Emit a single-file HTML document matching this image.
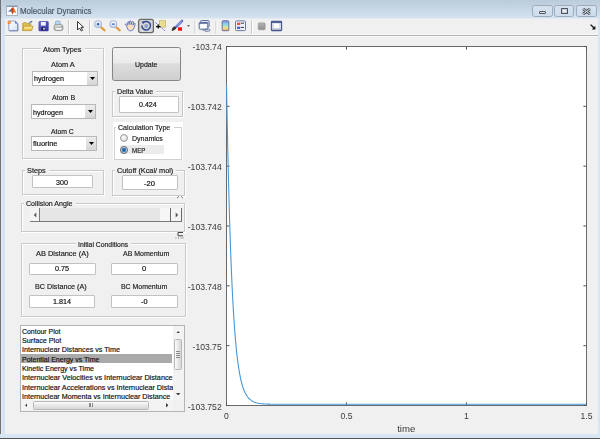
<!DOCTYPE html><html><head><meta charset="utf-8"><style>
*{margin:0;padding:0;box-sizing:border-box}
html,body{width:600px;height:439px;overflow:hidden;background:#f0f0f0;font-family:"Liberation Sans",sans-serif}
.a{position:absolute}
.t{position:absolute;white-space:pre;transform-origin:0 0;-webkit-text-stroke:0.18px currentColor}
.panel{position:absolute;border:1px solid #c9c9c9;box-shadow:1px 1px 0 #fff, inset 1px 1px 0 #fff}
.ptitle{position:absolute;background:#f0f0f0}
.edit{position:absolute;background:#fff;border:1px solid #bfc3c8;border-radius:1px}
.dd{position:absolute;background:#fff;border:1px solid #b8b8b8}
.ddb{position:absolute;background:linear-gradient(#ececec,#d6d6d6);}
</style></head><body><div id="root" style="position:absolute;left:0;top:0;width:600px;height:439px;overflow:hidden;filter:blur(0.35px)">

<div class="a" style="left:0;top:0;width:600px;height:19px;background:linear-gradient(#bacbdb,#d6e3f0)"></div>
<div class="a" style="left:0;top:18px;width:600px;height:1px;background:#e3eaf1"></div>
<div class="a" style="left:0;top:0;width:1px;height:439px;background:#707070"></div>
<div class="a" style="left:1px;top:18px;width:1px;height:421px;background:#e2edf9"></div>
<div class="a" style="left:2px;top:18px;width:3px;height:421px;background:#d6e4f2"></div>
<div class="a" style="left:598px;top:18px;width:2px;height:421px;background:#d8e5f2"></div>
<div class="a" style="left:0;top:434px;width:600px;height:4px;background:#d8e5f2"></div>
<div class="a" style="left:0;top:438px;width:600px;height:1px;background:#555"></div>
<div class="a" style="left:1px;top:0;width:1px;height:18px;background:#c4d3e2"></div>
<div class="a" style="left:5px;top:34px;width:593px;height:1px;background:#f8f8f8"></div>
<div class="a" style="left:5px;top:35px;width:593px;height:1px;background:#b4b4b4"></div>
<div class="a" style="left:5px;top:36px;width:593px;height:1px;background:#fafafa"></div>
<svg class="a" style="left:6px;top:5px" width="12" height="11" viewBox="0 0 12 11">
<rect x="0.5" y="0.5" width="11" height="10" fill="#fafbfc" stroke="#a8b4c0" stroke-width="1"/>
<rect x="1" y="1" width="10" height="1" fill="#8898a8"/>
<path d="M1.8 6.6 L4.6 4.6 L5.6 6.8 Z" fill="#3a80c8"/>
<path d="M4.6 4.6 L7.4 1.9 L10.4 8.2 L8.2 6.9 L6.2 9.4 L5.6 6.8 Z" fill="#e66a24"/>
<path d="M4.6 4.6 L7.4 1.9 L6.2 9.4 L5.6 6.8 Z" fill="#b43c1a"/>
</svg>
<div class="a" style="left:532.3px;top:5.2px;width:20.3px;height:11.5px;border:1px solid #9aacc0;border-radius:2.5px;background:linear-gradient(#d7e2ee,#cedceb)"></div>
<div class="a" style="left:554.4px;top:5.2px;width:20.0px;height:11.5px;border:1px solid #9aacc0;border-radius:2.5px;background:linear-gradient(#d7e2ee,#cedceb)"></div>
<div class="a" style="left:576.3px;top:5.2px;width:20.3px;height:11.5px;border:1px solid #9aacc0;border-radius:2.5px;background:linear-gradient(#d7e2ee,#cedceb)"></div>
<div class="a" style="left:538.8px;top:11px;width:7.2px;height:2.8px;background:#e8e8e8;border:1px solid #4c5560;border-radius:1px"></div>
<div class="a" style="left:560.6px;top:7.8px;width:7.6px;height:5.8px;background:#c8ced6;border:1.5px solid #4c5560;border-radius:0.5px"></div>
<div class="a" style="left:562.6px;top:9.8px;width:3.6px;height:1.8px;background:#eef2f6"></div>
<svg class="a" style="left:582px;top:8px" width="9" height="7" viewBox="0 0 9 7"><path d="M1 0.8 L8 6.2 M8 0.8 L1 6.2" stroke="#4c5560" stroke-width="2.8"/><path d="M1 0.8 L8 6.2 M8 0.8 L1 6.2" stroke="#e4e9ef" stroke-width="1.0"/></svg>
<svg class="a" style="left:0;top:17px" width="300" height="18" viewBox="0 17 300 18">
<!-- new -->
<defs>
<linearGradient id="pg" x1="0" y1="0" x2="1" y2="1"><stop offset="0" stop-color="#ffffff"/><stop offset="1" stop-color="#d6e2f4"/></linearGradient>
<linearGradient id="fd" x1="0" y1="0" x2="0" y2="1"><stop offset="0" stop-color="#fff3a8"/><stop offset="1" stop-color="#e3b83a"/></linearGradient>
<linearGradient id="sv" x1="0" y1="0" x2="1" y2="1"><stop offset="0" stop-color="#6f70e0"/><stop offset="1" stop-color="#2f32a0"/></linearGradient>
<linearGradient id="pr" x1="0" y1="0" x2="0" y2="1"><stop offset="0" stop-color="#e4e4e4"/><stop offset="1" stop-color="#9a9a9a"/></linearGradient>
</defs>
<path d="M8.8 21 H15.2 L17.6 23.4 V30.6 H8.8 Z" fill="url(#pg)" stroke="#8c9bc8" stroke-width="0.9"/>
<path d="M9.3 30.9 H17.9 V23.6" fill="none" stroke="#6a78b0" stroke-width="0.8"/>
<path d="M15.2 21 V23.4 H17.6 Z" fill="#4a60a8"/>
<circle cx="9.2" cy="22.5" r="1.7" fill="#f07a38"/>
<circle cx="9.2" cy="22.5" r="0.7" fill="#ffd080"/>
<!-- open -->
<path d="M22.8 30.6 V23.6 Q22.8 22.8 23.6 22.8 H26.4 L27.3 23.7 H30.8 V26" fill="#e0c050" stroke="#b89430" stroke-width="0.8"/>
<path d="M23.6 26.2 H33 L31.6 30.6 H22.8 Z" fill="url(#fd)" stroke="#b89430" stroke-width="0.8"/>
<path d="M28.5 23.3 Q29.8 21.4 31.8 21.8" fill="none" stroke="#4a6ea8" stroke-width="1"/>
<path d="M32.6 21.6 L31 20.8 L31.3 22.8 Z" fill="#3a5ea0"/>
<!-- save -->
<rect x="38.9" y="21.6" width="9.4" height="9.3" rx="0.6" fill="url(#sv)" stroke="#3838a0" stroke-width="0.6"/>
<rect x="40.9" y="22" width="4.9" height="3.6" fill="#f2f4ff"/>
<rect x="41.3" y="27" width="3.9" height="3.5" fill="#222250"/>
<rect x="43.2" y="27.8" width="1.6" height="1.8" fill="#e8e8f0"/>
<!-- print -->
<path d="M55 24.5 L55.8 21 H59.8 L60.6 24.5 Z" fill="#b8d8f4" stroke="#7c9cc0" stroke-width="0.6"/>
<rect x="54" y="24.4" width="9" height="6.2" rx="2.2" fill="url(#pr)" stroke="#7a7a7a" stroke-width="0.6"/>
<rect x="55.5" y="28" width="6" height="1.8" fill="#f4f4f4"/>
<circle cx="61.6" cy="26.4" r="0.5" fill="#40a040"/>
<!-- seps -->
<rect x="68" y="20" width="1" height="14" fill="#c6c6c6"/><rect x="69" y="20" width="1" height="14" fill="#fff"/>
<rect x="89" y="20" width="1" height="14" fill="#c6c6c6"/><rect x="90" y="20" width="1" height="14" fill="#fff"/>
<!-- pointer -->
<path d="M77.5 21.5 V30 L79.5 28 L81.3 31 L82.6 30.3 L81 27.3 L83.6 27.3 Z" fill="#fff" stroke="#202020" stroke-width="0.9"/>
<!-- zoom in -->
<defs><linearGradient id="ln" x1="0" y1="0" x2="0" y2="1"><stop offset="0" stop-color="#ffffff"/><stop offset="1" stop-color="#c4daf2"/></linearGradient></defs>
<line x1="101.2" y1="27.4" x2="104.6" y2="30.4" stroke="#e89a3a" stroke-width="2.1" stroke-linecap="round"/>
<circle cx="98.1" cy="24.1" r="3.4" fill="url(#ln)" stroke="#a8b4e0" stroke-width="1.1"/>
<path d="M96.8 24.1 H99.4 M98.1 22.8 V25.4" stroke="#2a4ea0" stroke-width="1.1"/>
<!-- zoom out -->
<line x1="116.4" y1="27.4" x2="119.8" y2="30.4" stroke="#e89a3a" stroke-width="2.1" stroke-linecap="round"/>
<circle cx="113.3" cy="24.1" r="3.4" fill="url(#ln)" stroke="#a8b4e0" stroke-width="1.1"/>
<path d="M111.9 24.1 H114.7" stroke="#2a4ea0" stroke-width="1.1"/>
<!-- hand -->
<path d="M126.6 26.2 L125.4 24.6 Q125.2 23.6 126.3 24 L127.6 25.2 V22.3 Q127.9 21.3 128.8 21.9 L129.2 24.6 L129.6 21.2 Q130.3 20.4 131 21.2 L131.2 24.6 L132.1 21.7 Q132.9 21.1 133.5 21.9 L133 25.2 L134.2 23.4 Q135 23 135.3 23.8 L134.2 27.5 Q133.4 30.6 130.8 30.8 H129.6 Q127.6 30.4 126.6 26.2 Z" fill="#fbe0c0" stroke="#4f6cc8" stroke-width="0.85"/>
<!-- rotate pressed -->
<rect x="138.6" y="19.4" width="14.8" height="13.2" rx="2" fill="#d6d6d6" stroke="#6a6a6a" stroke-width="1.3"/>
<path d="M143.2 22.6 A4.3 4.3 0 1 1 141.9 25.4" fill="none" stroke="#2f4a92" stroke-width="1.5"/>
<path d="M141.4 21.6 L144.6 21.4 L143.2 24.2 Z" fill="#2f4a92"/>
<circle cx="146.2" cy="26" r="1.9" fill="#8ca0cc"/>
<!-- data cursor -->
<rect x="159.4" y="20.8" width="6.2" height="6.2" fill="#f0e8a0" stroke="#c2b060" stroke-width="0.8"/>
<rect x="160.6" y="22" width="3.8" height="3.8" fill="#e6dc8c"/>
<path d="M155.6 22.6 L165.6 31.4" stroke="#4a56e0" stroke-width="0.9" stroke-dasharray="1.6 1.1"/>
<path d="M158.2 24.6 V28.6 M156 26.6 H160.4" stroke="#111" stroke-width="1.4"/>
<!-- brush -->
<path d="M182 21 L176.4 26.6" stroke="#6474d0" stroke-width="2.6" stroke-linecap="round"/>
<path d="M181.6 21.2 L177 25.8" stroke="#c0c8f4" stroke-width="0.8"/>
<path d="M171.8 31 Q171.4 27.8 174.2 26.2 L176.6 27.6 Q175.6 30.6 171.8 31 Z" fill="#3a3a3a"/>
<rect x="178" y="27.3" width="4" height="3.4" fill="#ff0a0a"/>
<path d="M187 25.2 H190 L188.5 26.8 Z" fill="#333"/>
<rect x="194.5" y="20.5" width="1" height="13" fill="#c6c6c6"/><rect x="195.5" y="20.5" width="1" height="13" fill="#fff"/>
<!-- link -->
<rect x="200.5" y="20.6" width="8.6" height="6.4" rx="0.8" fill="#e4ecf6" stroke="#5a6c9c" stroke-width="1"/>
<rect x="199.2" y="22.6" width="8.6" height="6.6" rx="0.8" fill="#eef4fb" stroke="#5a6c9c" stroke-width="1"/>
<rect x="199.2" y="22.4" width="8.6" height="1.4" fill="#5a6c9c"/>
<rect x="200.6" y="24.4" width="5.8" height="3.6" fill="#ffffff"/>
<path d="M202.6 30.2 H205.6 M205 29.2 H208.6 Q210 29.2 210 30.2 Q210 31.2 208.6 31.2 H205" fill="none" stroke="#5a6c9c" stroke-width="0.9"/>
<rect x="215.5" y="20.5" width="1" height="13" fill="#c6c6c6"/><rect x="216.5" y="20.5" width="1" height="13" fill="#fff"/>
<!-- colorbar -->
<defs><linearGradient id="cb" x1="0" y1="0" x2="0" y2="1"><stop offset="0" stop-color="#8a90ea"/><stop offset="0.4" stop-color="#8adce6"/><stop offset="0.72" stop-color="#eee48a"/><stop offset="1" stop-color="#f2a45c"/></linearGradient>
<linearGradient id="gr" x1="0" y1="0" x2="0" y2="1"><stop offset="0" stop-color="#b4b4b4"/><stop offset="1" stop-color="#8e8e8e"/></linearGradient></defs>
<rect x="222.2" y="20.8" width="6.6" height="9.9" rx="0.8" fill="url(#cb)" stroke="#5a6a98" stroke-width="0.9"/>
<!-- legend -->
<rect x="235.5" y="20.9" width="10" height="9.7" rx="1" fill="#eef1f7" stroke="#6a7aa0" stroke-width="1"/>
<rect x="237" y="22.6" width="3.2" height="2.4" fill="#f05050"/>
<rect x="237" y="26.6" width="3.2" height="2.4" fill="#5060e8"/>
<path d="M240.8 23.2 H244 M240.8 27.4 H244" stroke="#222" stroke-width="0.9"/>
<rect x="251" y="20.5" width="1" height="13" fill="#c6c6c6"/><rect x="252" y="20.5" width="1" height="13" fill="#fff"/>
<!-- grid -->
<rect x="258.2" y="22.8" width="7" height="7" rx="1.2" fill="url(#gr)" stroke="#8a8a8a" stroke-width="0.5"/>
<!-- plot box -->
<rect x="271.4" y="21.3" width="10.2" height="9.3" rx="0.6" fill="#d4dae6" stroke="#43558f" stroke-width="1.1"/>
<rect x="271.4" y="21.3" width="10.2" height="1.6" fill="#43558f"/>
<rect x="273.8" y="23.6" width="5.4" height="4.6" fill="#ffffff"/>
<rect x="272" y="28.6" width="9" height="1.2" fill="#a8b0c4"/>
</svg>
<svg class="a" style="left:590px;top:24px" width="6" height="6" viewBox="0 0 6 6"><path d="M0.6 0.6 L3.8 3.8" stroke="#111" stroke-width="1.3"/><path d="M5.4 1.8 V5.4 H1.8 Z" fill="#111"/></svg>
<div class="panel" style="left:22px;top:48px;width:82px;height:111px"></div>
<div class="ptitle" style="left:41px;top:44px;width:44px;height:8px"></div>
<div class="dd" style="left:32px;top:71px;width:66px;height:15px"></div>
<div class="ddb" style="left:87px;top:72px;width:10px;height:13px"></div>
<svg class="a" style="left:90.0px;top:77.0px" width="5" height="3" viewBox="0 0 5 3"><path d="M0 0 H5 L2.5 3 Z" fill="#000"/></svg>
<div class="dd" style="left:30.5px;top:104px;width:65.5px;height:15px"></div>
<div class="ddb" style="left:85px;top:105px;width:10px;height:13px"></div>
<svg class="a" style="left:88.0px;top:110.0px" width="5" height="3" viewBox="0 0 5 3"><path d="M0 0 H5 L2.5 3 Z" fill="#000"/></svg>
<div class="dd" style="left:31px;top:136px;width:66px;height:15px"></div>
<div class="ddb" style="left:86px;top:137px;width:10px;height:13px"></div>
<svg class="a" style="left:89.0px;top:142.0px" width="5" height="3" viewBox="0 0 5 3"><path d="M0 0 H5 L2.5 3 Z" fill="#000"/></svg>
<div class="a" style="left:112px;top:47px;width:69px;height:34px;border:1px solid #858585;border-radius:2.5px;background:linear-gradient(#f2f2f2 0%,#ebebeb 45%,#dddddd 50%,#cfcfcf 100%)"></div>
<div class="panel" style="left:112px;top:91px;width:71px;height:26px"></div>
<div class="ptitle" style="left:115px;top:87px;width:41px;height:8px"></div>
<div class="edit" style="left:119px;top:96px;width:60px;height:17px"></div>
<div class="a" style="left:113px;top:122px;width:70px;height:38px;background:#fff"></div>
<div class="a" style="left:113.5px;top:127px;width:68.5px;height:32.5px;border:1px solid #d0d0d0"></div>
<div class="a" style="left:116px;top:123px;width:58px;height:8px;background:#fff"></div>
<div class="a" style="left:119.5px;top:145px;width:44.5px;height:9px;background:#ececec"></div>
<div class="a" style="left:120px;top:134px;width:8.4px;height:8.4px;border-radius:50%;border:1px solid #9a9a9a;background:radial-gradient(circle at 40% 40%,#fafafa,#d4d4d4)"></div>
<div class="a" style="left:120px;top:146px;width:8.4px;height:8.4px;border-radius:50%;border:1px solid #5e6670;background:radial-gradient(circle,#0d3f78 0,#2d7fc8 1.4px,#5a8fba 2.1px,#d0d4d8 2.6px,#b8bcc0 4.2px)"></div>
<div class="panel" style="left:22px;top:170px;width:82px;height:25px"></div>
<div class="ptitle" style="left:25px;top:166px;width:24px;height:8px"></div>
<div class="edit" style="left:32px;top:175px;width:61px;height:13px"></div>
<div class="panel" style="left:112px;top:170px;width:73px;height:26px"></div>
<div class="ptitle" style="left:115px;top:166px;width:61px;height:8px"></div>
<div class="edit" style="left:122px;top:175px;width:56px;height:15px"></div>
<svg class="a" style="left:176px;top:195px" width="8" height="4" viewBox="0 0 8 4"><path d="M1 3 L2.8 1.3 M5 1.3 L6.8 3" fill="none" stroke="#555" stroke-width="0.9"/></svg>
<div class="panel" style="left:21px;top:203px;width:164px;height:29px"></div>
<div class="ptitle" style="left:24px;top:199px;width:52px;height:8px"></div>
<div class="a" style="left:29.5px;top:208px;width:152px;height:14px;background:#e6e6e6;border-bottom:1px solid #7a7a7a"></div>
<div class="a" style="left:29.5px;top:208px;width:10px;height:14px;background:#f4f4f4;border-right:1px solid #7a7a7a;border-bottom:1px solid #7a7a7a"></div>
<div class="a" style="left:160px;top:208px;width:11px;height:14px;background:#f6f6f6;border-right:1px solid #6a6a6a;border-bottom:1px solid #7a7a7a"></div>
<div class="a" style="left:171px;top:208px;width:10.5px;height:14px;background:#f4f4f4;border-right:1px solid #6a6a6a;border-bottom:1px solid #7a7a7a"></div>
<svg class="a" style="left:33px;top:212px" width="4" height="6" viewBox="0 0 4 6"><path d="M3.3 0.5 V5.5 L0.8 3 Z" fill="#555"/></svg>
<svg class="a" style="left:175px;top:212px" width="4" height="6" viewBox="0 0 4 6"><path d="M0.7 0.5 V5.5 L3.2 3 Z" fill="#555"/></svg>
<svg class="a" style="left:175px;top:231px" width="9" height="8" viewBox="0 0 9 8"><path d="M8 1.5 H3 V4.8 H8" fill="none" stroke="#444" stroke-width="1"/><path d="M0.5 7 H1.5 M3 7 H4 M5.5 7 H6.5 M7.5 7 H8.5" fill="none" stroke="#666" stroke-width="0.9"/></svg>
<div class="panel" style="left:21px;top:243px;width:165px;height:74px"></div>
<div class="ptitle" style="left:76px;top:239px;width:55px;height:8px"></div>
<div class="edit" style="left:28.5px;top:262.5px;width:67px;height:12.5px"></div>
<div class="edit" style="left:110.5px;top:262.5px;width:67.5px;height:12.5px"></div>
<div class="edit" style="left:28.5px;top:295px;width:66.5px;height:13px"></div>
<div class="edit" style="left:110.5px;top:295px;width:67.5px;height:13px"></div>
<div class="a" style="left:20px;top:325px;width:165px;height:87px;background:#fff;border:1px solid #b4b4b4"></div>
<div class="a" style="left:21px;top:354px;width:151px;height:9px;background:#aaaaaa"></div>
<div class="a" style="left:21px;top:326px;width:151.5px;height:74px;overflow:hidden">
<div class="t" style="left:1.00px;top:1.74px;font-size:7.4px;line-height:7.4px;color:#111;transform:scaleX(0.9369);">Contour Plot</div>
<div class="t" style="left:1.00px;top:11.07px;font-size:7.4px;line-height:7.4px;color:#111;transform:scaleX(0.9735);">Surface Plot</div>
<div class="t" style="left:1.00px;top:20.40px;font-size:7.4px;line-height:7.4px;color:#111;transform:scaleX(0.9689);">Internuclear Distances vs Time</div>
<div class="t" style="left:1.00px;top:29.73px;font-size:7.4px;line-height:7.4px;color:#111;transform:scaleX(0.9468);">Potential Energy vs Time</div>
<div class="t" style="left:1.00px;top:39.06px;font-size:7.4px;line-height:7.4px;color:#111;transform:scaleX(0.9578);">Kinetic Energy vs Time</div>
<div class="t" style="left:1.00px;top:48.39px;font-size:7.4px;line-height:7.4px;color:#111;transform:scaleX(0.9800);">Internuclear Velocities vs Internuclear Distance</div>
<div class="t" style="left:1.00px;top:57.72px;font-size:7.4px;line-height:7.4px;color:#111;transform:scaleX(0.9800);">Internuclear Accelerations vs Internuclear Distance</div>
<div class="t" style="left:1.00px;top:67.05px;font-size:7.4px;line-height:7.4px;color:#111;transform:scaleX(0.9671);">Internuclear Momenta vs Internuclear Distance</div>
</div>
<div class="a" style="left:172.5px;top:326px;width:11.5px;height:74px;background:#f3f3f3"></div>
<div class="a" style="left:173.5px;top:338.5px;width:8.8px;height:31px;border:1px solid #b8b8b8;border-radius:1.5px;background:linear-gradient(90deg,#fbfbfb,#e4e4e4 60%,#d6d6d6)"></div>
<div class="a" style="left:175.6px;top:351.3px;width:4.2px;height:0.9px;background:#8a8a8a"></div>
<div class="a" style="left:175.6px;top:353.1px;width:4.2px;height:0.9px;background:#8a8a8a"></div>
<div class="a" style="left:175.6px;top:354.9px;width:4.2px;height:0.9px;background:#8a8a8a"></div>
<div class="a" style="left:175.6px;top:356.7px;width:4.2px;height:0.9px;background:#8a8a8a"></div>
<svg class="a" style="left:176.3px;top:330.8px" width="4.4" height="2.6" viewBox="0 0 4.4 2.6"><path d="M0 2.6 H4.4 L2.2 0 Z" fill="#404040"/></svg>
<svg class="a" style="left:176.3px;top:392.6px" width="4.4" height="2.6" viewBox="0 0 4.4 2.6"><path d="M0 0 H4.4 L2.2 2.6 Z" fill="#404040"/></svg>
<div class="a" style="left:21px;top:400px;width:151.5px;height:11px;background:#f3f3f3"></div>
<div class="a" style="left:172.5px;top:400px;width:11.5px;height:11px;background:#f0f0f0"></div>
<div class="a" style="left:33.3px;top:401px;width:115.3px;height:9.3px;border:1px solid #b8b8b8;border-radius:1.5px;background:linear-gradient(#fbfbfb,#e4e4e4 60%,#d6d6d6)"></div>
<div class="a" style="left:88.6px;top:403.3px;width:0.9px;height:4px;background:#8a8a8a"></div>
<div class="a" style="left:90.4px;top:403.3px;width:0.9px;height:4px;background:#8a8a8a"></div>
<div class="a" style="left:92.2px;top:403.3px;width:0.9px;height:4px;background:#8a8a8a"></div>
<svg class="a" style="left:24.5px;top:403.4px" width="2.6" height="4.4" viewBox="0 0 2.6 4.4"><path d="M2.6 0 V4.4 L0 2.2 Z" fill="#404040"/></svg>
<svg class="a" style="left:165.6px;top:403.4px" width="2.6" height="4.4" viewBox="0 0 2.6 4.4"><path d="M0 0 V4.4 L2.6 2.2 Z" fill="#404040"/></svg>
<div class="t" style="left:20.10px;top:6.95px;font-size:8.8px;line-height:8.8px;color:#4a5868;transform:scaleX(0.9040);">Molecular Dynamics</div>
<div class="t" style="left:43.00px;top:45.54px;font-size:7.4px;line-height:7.4px;color:#222;transform:scaleX(0.9900);">Atom Types</div>
<div class="t" style="left:51.20px;top:60.54px;font-size:7.4px;line-height:7.4px;color:#222;transform:scaleX(0.9988);">Atom A</div>
<div class="t" style="left:34.00px;top:75.34px;font-size:7.4px;line-height:7.4px;color:#111;transform:scaleX(0.9731);">hydrogen</div>
<div class="t" style="left:52.00px;top:94.34px;font-size:7.4px;line-height:7.4px;color:#222;transform:scaleX(0.9532);">Atom B</div>
<div class="t" style="left:32.50px;top:108.74px;font-size:7.4px;line-height:7.4px;color:#111;transform:scaleX(0.9731);">hydrogen</div>
<div class="t" style="left:51.40px;top:127.94px;font-size:7.4px;line-height:7.4px;color:#222;transform:scaleX(0.9253);">Atom C</div>
<div class="t" style="left:33.00px;top:140.24px;font-size:7.4px;line-height:7.4px;color:#111;transform:scaleX(1.0103);">fluorine</div>
<div class="t" style="left:134.90px;top:61.14px;font-size:7.4px;line-height:7.4px;color:#222;transform:scaleX(0.9436);">Update</div>
<div class="t" style="left:117.40px;top:88.34px;font-size:7.4px;line-height:7.4px;color:#222;transform:scaleX(0.9636);">Delta Value</div>
<div class="t" style="left:139.20px;top:100.64px;font-size:7.4px;line-height:7.4px;color:#111;transform:scaleX(0.9568);">0.424</div>
<div class="t" style="left:117.90px;top:123.74px;font-size:7.4px;line-height:7.4px;color:#222;transform:scaleX(0.9594);">Calculation Type</div>
<div class="t" style="left:131.80px;top:134.84px;font-size:7.4px;line-height:7.4px;color:#222;transform:scaleX(0.9491);">Dynamics</div>
<div class="t" style="left:131.80px;top:146.94px;font-size:7.4px;line-height:7.4px;color:#222;transform:scaleX(0.8367);">MEP</div>
<div class="t" style="left:27.40px;top:167.44px;font-size:7.4px;line-height:7.4px;color:#222;transform:scaleX(0.9891);">Steps</div>
<div class="t" style="left:55.80px;top:178.94px;font-size:7.4px;line-height:7.4px;color:#111;transform:scaleX(0.9641);">300</div>
<div class="t" style="left:117.00px;top:167.04px;font-size:7.4px;line-height:7.4px;color:#222;transform:scaleX(0.9885);">Cutoff (Kcal/ mol)</div>
<div class="t" style="left:144.30px;top:179.74px;font-size:7.4px;line-height:7.4px;color:#111;transform:scaleX(1.0292);">-20</div>
<div class="t" style="left:25.80px;top:200.24px;font-size:7.4px;line-height:7.4px;color:#222;transform:scaleX(0.9591);">Collision Angle</div>
<div class="t" style="left:77.90px;top:240.74px;font-size:7.4px;line-height:7.4px;color:#222;transform:scaleX(0.9238);">Initial Conditions</div>
<div class="t" style="left:35.90px;top:250.24px;font-size:7.4px;line-height:7.4px;color:#222;transform:scaleX(1.0004);">AB Distance (A)</div>
<div class="t" style="left:54.70px;top:265.24px;font-size:7.4px;line-height:7.4px;color:#111;transform:scaleX(0.9798);">0.75</div>
<div class="t" style="left:122.70px;top:250.24px;font-size:7.4px;line-height:7.4px;color:#222;transform:scaleX(0.9470);">AB Momentum</div>
<div class="t" style="left:141.80px;top:265.24px;font-size:7.4px;line-height:7.4px;color:#111;transform:scaleX(1.0182);">0</div>
<div class="t" style="left:35.30px;top:282.74px;font-size:7.4px;line-height:7.4px;color:#222;transform:scaleX(0.9758);">BC Distance (A)</div>
<div class="t" style="left:52.50px;top:297.94px;font-size:7.4px;line-height:7.4px;color:#111;transform:scaleX(0.9730);">1.814</div>
<div class="t" style="left:120.80px;top:282.74px;font-size:7.4px;line-height:7.4px;color:#222;transform:scaleX(0.9372);">BC Momentum</div>
<div class="t" style="left:140.80px;top:297.94px;font-size:7.4px;line-height:7.4px;color:#111;transform:scaleX(0.9881);">-0</div>
<div class="a" style="left:226px;top:46px;width:361px;height:360px;background:#fff;border:1px solid #6a6a6a"></div>
<svg class="a" style="left:0;top:0" width="600" height="439"><path d="M226.5 46.50 H229.6 M586.5 46.50 H583.4" stroke="#555" stroke-width="1"/><path d="M226.5 106.33 H229.6 M586.5 106.33 H583.4" stroke="#555" stroke-width="1"/><path d="M226.5 166.17 H229.6 M586.5 166.17 H583.4" stroke="#555" stroke-width="1"/><path d="M226.5 226.00 H229.6 M586.5 226.00 H583.4" stroke="#555" stroke-width="1"/><path d="M226.5 285.83 H229.6 M586.5 285.83 H583.4" stroke="#555" stroke-width="1"/><path d="M226.5 345.67 H229.6 M586.5 345.67 H583.4" stroke="#555" stroke-width="1"/><path d="M226.5 405.50 H229.6 M586.5 405.50 H583.4" stroke="#555" stroke-width="1"/><path d="M226.50 46.5 V49.6 M226.50 405.5 V402.4" stroke="#555" stroke-width="1"/><path d="M346.50 46.5 V49.6 M346.50 405.5 V402.4" stroke="#555" stroke-width="1"/><path d="M466.50 46.5 V49.6 M466.50 405.5 V402.4" stroke="#555" stroke-width="1"/><path d="M586.50 46.5 V49.6 M586.50 405.5 V402.4" stroke="#555" stroke-width="1"/><polyline points="226.50,84.60 227.50,136.88 228.50,180.61 229.50,217.20 230.50,247.79 231.50,273.39 232.50,294.80 233.50,312.70 234.50,327.68 235.50,340.21 236.50,350.69 237.50,359.46 238.50,366.79 239.50,372.93 240.50,378.06 241.50,382.35 242.50,385.94 243.50,388.94 244.50,391.45 245.50,393.55 246.50,395.31 247.50,396.78 248.50,398.01 249.50,399.04 250.50,399.90 251.50,400.62 252.50,401.22 253.50,401.72 254.50,402.15 255.50,402.50 256.50,402.79 257.50,403.04 258.50,403.25 259.50,403.42 260.50,403.56 261.50,403.68 262.50,403.78 263.50,403.87 264.50,403.94 265.50,404.00 266.50,404.05 267.50,404.09 268.50,404.12 269.50,404.15 270.50,404.18 271.50,404.20 272.50,404.21 273.50,404.23 274.50,404.24 275.50,404.25 276.50,404.26 277.50,404.26 278.50,404.27 279.50,404.28 280.50,404.28 281.50,404.28 282.50,404.29 283.50,404.29 284.50,404.29 285.50,404.29 286.50,404.29 287.50,404.29 288.50,404.30 289.50,404.30 290.50,404.30 291.50,404.30 292.50,404.30 293.50,404.30 294.50,404.30 295.50,404.30 296.50,404.30 297.50,404.30 298.50,404.30 299.50,404.30 300.50,404.30 301.50,404.30 302.50,404.30 303.50,404.30 304.50,404.30 305.50,404.30 306.50,404.30 307.50,404.30 308.50,404.30 309.50,404.30 310.50,404.30 311.50,404.30 312.50,404.30 313.50,404.30 314.50,404.30 315.50,404.30 316.50,404.30 317.50,404.30 318.50,404.30 319.50,404.30 320.50,404.30 321.50,404.30 322.50,404.30 323.50,404.30 324.50,404.30 325.50,404.30 326.50,404.30 327.50,404.30 328.50,404.30 329.50,404.30 330.50,404.30 331.50,404.30 332.50,404.30 333.50,404.30 334.50,404.30 335.50,404.30 336.50,404.30 337.50,404.30 338.50,404.30 339.50,404.30 340.50,404.30 341.50,404.30 342.50,404.30 343.50,404.30 344.50,404.30 345.50,404.30 346.50,404.30 347.50,404.30 348.50,404.30 349.50,404.30 350.50,404.30 351.50,404.30 352.50,404.30 353.50,404.30 354.50,404.30 355.50,404.30 356.50,404.30 357.50,404.30 358.50,404.30 359.50,404.30 360.50,404.30 361.50,404.30 362.50,404.30 363.50,404.30 364.50,404.30 365.50,404.30 366.50,404.30 367.50,404.30 368.50,404.30 369.50,404.30 370.50,404.30 371.50,404.30 372.50,404.30 373.50,404.30 374.50,404.30 375.50,404.30 376.50,404.30 377.50,404.30 378.50,404.30 379.50,404.30 380.50,404.30 381.50,404.30 382.50,404.30 383.50,404.30 384.50,404.30 385.50,404.30 386.50,404.30 387.50,404.30 388.50,404.30 389.50,404.30 390.50,404.30 391.50,404.30 392.50,404.30 393.50,404.30 394.50,404.30 395.50,404.30 396.50,404.30 397.50,404.30 398.50,404.30 399.50,404.30 400.50,404.30 401.50,404.30 402.50,404.30 403.50,404.30 404.50,404.30 405.50,404.30 406.50,404.30 407.50,404.30 408.50,404.30 409.50,404.30 410.50,404.30 411.50,404.30 412.50,404.30 413.50,404.30 414.50,404.30 415.50,404.30 416.50,404.30 417.50,404.30 418.50,404.30 419.50,404.30 420.50,404.30 421.50,404.30 422.50,404.30 423.50,404.30 424.50,404.30 425.50,404.30 426.50,404.30 427.50,404.30 428.50,404.30 429.50,404.30 430.50,404.30 431.50,404.30 432.50,404.30 433.50,404.30 434.50,404.30 435.50,404.30 436.50,404.30 437.50,404.30 438.50,404.30 439.50,404.30 440.50,404.30 441.50,404.30 442.50,404.30 443.50,404.30 444.50,404.30 445.50,404.30 446.50,404.30 447.50,404.30 448.50,404.30 449.50,404.30 450.50,404.30 451.50,404.30 452.50,404.30 453.50,404.30 454.50,404.30 455.50,404.30 456.50,404.30 457.50,404.30 458.50,404.30 459.50,404.30 460.50,404.30 461.50,404.30 462.50,404.30 463.50,404.30 464.50,404.30 465.50,404.30 466.50,404.30 467.50,404.30 468.50,404.30 469.50,404.30 470.50,404.30 471.50,404.30 472.50,404.30 473.50,404.30 474.50,404.30 475.50,404.30 476.50,404.30 477.50,404.30 478.50,404.30 479.50,404.30 480.50,404.30 481.50,404.30 482.50,404.30 483.50,404.30 484.50,404.30 485.50,404.30 486.50,404.30 487.50,404.30 488.50,404.30 489.50,404.30 490.50,404.30 491.50,404.30 492.50,404.30 493.50,404.30 494.50,404.30 495.50,404.30 496.50,404.30 497.50,404.30 498.50,404.30 499.50,404.30 500.50,404.30 501.50,404.30 502.50,404.30 503.50,404.30 504.50,404.30 505.50,404.30 506.50,404.30 507.50,404.30 508.50,404.30 509.50,404.30 510.50,404.30 511.50,404.30 512.50,404.30 513.50,404.30 514.50,404.30 515.50,404.30 516.50,404.30 517.50,404.30 518.50,404.30 519.50,404.30 520.50,404.30 521.50,404.30 522.50,404.30 523.50,404.30 524.50,404.30 525.50,404.30 526.50,404.30 527.50,404.30 528.50,404.30 529.50,404.30 530.50,404.30 531.50,404.30 532.50,404.30 533.50,404.30 534.50,404.30 535.50,404.30 536.50,404.30 537.50,404.30 538.50,404.30 539.50,404.30 540.50,404.30 541.50,404.30 542.50,404.30 543.50,404.30 544.50,404.30 545.50,404.30 546.50,404.30 547.50,404.30 548.50,404.30 549.50,404.30 550.50,404.30 551.50,404.30 552.50,404.30 553.50,404.30 554.50,404.30 555.50,404.30 556.50,404.30 557.50,404.30 558.50,404.30 559.50,404.30 560.50,404.30 561.50,404.30 562.50,404.30 563.50,404.30 564.50,404.30 565.50,404.30 566.50,404.30 567.50,404.30 568.50,404.30 569.50,404.30 570.50,404.30 571.50,404.30 572.50,404.30 573.50,404.30 574.50,404.30 575.50,404.30 576.50,404.30 577.50,404.30 578.50,404.30 579.50,404.30 580.50,404.30 581.50,404.30 582.50,404.30 583.50,404.30 584.50,404.30 585.50,404.30 586.50,404.30" fill="none" stroke="#4797d6" stroke-width="1.1"/></svg>
<div class="t" style="left:192.54px;top:43.12px;font-size:8.6px;line-height:8.6px;color:#3a3a3a;transform:scaleX(1.0000);-webkit-text-stroke:0px">-103.74</div>
<div class="t" style="left:187.76px;top:103.02px;font-size:8.6px;line-height:8.6px;color:#3a3a3a;transform:scaleX(1.0000);-webkit-text-stroke:0px">-103.742</div>
<div class="t" style="left:187.76px;top:162.92px;font-size:8.6px;line-height:8.6px;color:#3a3a3a;transform:scaleX(1.0000);-webkit-text-stroke:0px">-103.744</div>
<div class="t" style="left:187.76px;top:222.82px;font-size:8.6px;line-height:8.6px;color:#3a3a3a;transform:scaleX(1.0000);-webkit-text-stroke:0px">-103.746</div>
<div class="t" style="left:187.76px;top:282.72px;font-size:8.6px;line-height:8.6px;color:#3a3a3a;transform:scaleX(1.0000);-webkit-text-stroke:0px">-103.748</div>
<div class="t" style="left:192.54px;top:342.62px;font-size:8.6px;line-height:8.6px;color:#3a3a3a;transform:scaleX(1.0000);-webkit-text-stroke:0px">-103.75</div>
<div class="t" style="left:187.76px;top:402.52px;font-size:8.6px;line-height:8.6px;color:#3a3a3a;transform:scaleX(1.0000);-webkit-text-stroke:0px">-103.752</div>
<div class="t" style="left:224.11px;top:411.52px;font-size:8.6px;line-height:8.6px;color:#3a3a3a;transform:scaleX(1.0000);-webkit-text-stroke:0px">0</div>
<div class="t" style="left:340.52px;top:411.52px;font-size:8.6px;line-height:8.6px;color:#3a3a3a;transform:scaleX(1.0000);-webkit-text-stroke:0px">0.5</div>
<div class="t" style="left:464.11px;top:411.52px;font-size:8.6px;line-height:8.6px;color:#3a3a3a;transform:scaleX(1.0000);-webkit-text-stroke:0px">1</div>
<div class="t" style="left:580.52px;top:411.52px;font-size:8.6px;line-height:8.6px;color:#3a3a3a;transform:scaleX(1.0000);-webkit-text-stroke:0px">1.5</div>
<div class="t" style="left:397.14px;top:424.17px;font-size:9.6px;line-height:9.6px;color:#3a3a3a;transform:scaleX(1.0000);-webkit-text-stroke:0px">time</div>
</div></body></html>
